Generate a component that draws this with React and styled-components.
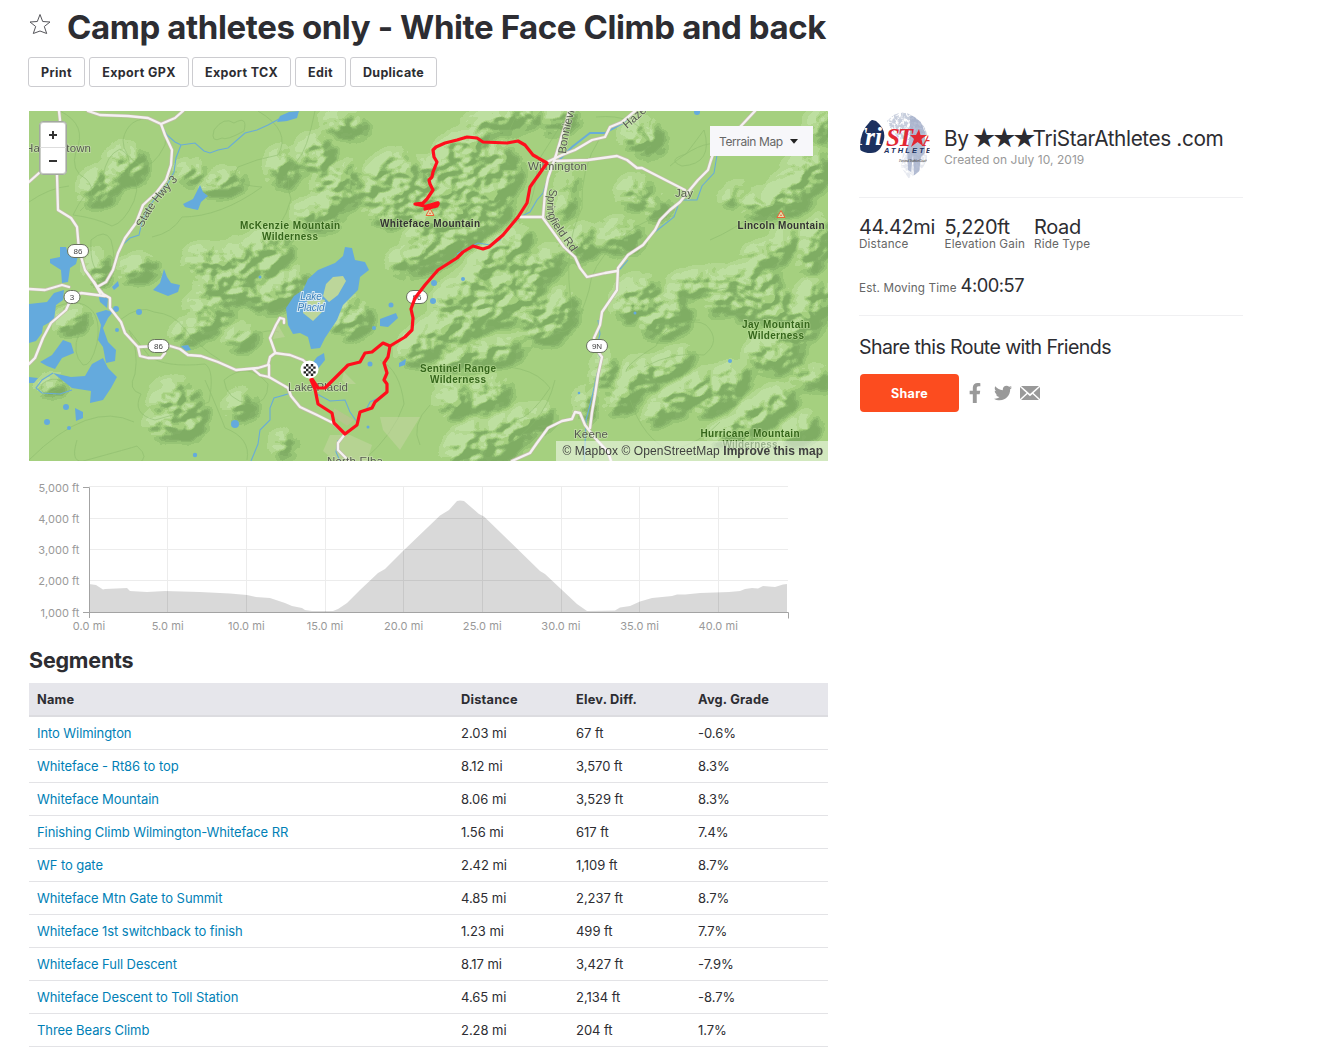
import React from "react";
import styled, { createGlobalStyle } from "styled-components";
import { FaFacebookF, FaTwitter } from "react-icons/fa";

const GlobalStyle = createGlobalStyle`
  * {
    box-sizing: border-box;
  }
  body {
    margin: 0;
    background: #fff;
    color: #2d2d32;
    font-family: Inter, "Liberation Sans", sans-serif;
  }
`;

const Page = styled.div`
  width: 1319px;
  height: 1061px;
  overflow: hidden;
  padding-left: 28px;
`;
const Header = styled.header`
  display: flex;
  height: 57px;
  padding: 13px 0 0 1px;
`;
const Title = styled.h1`
  margin: -7px 0 0 16px;
  font-size: 33px;
  line-height: 42px;
  font-weight: 700;
  letter-spacing: -0.4px;
  white-space: nowrap;
`;
const Toolbar = styled.div`
  display: flex;
  height: 54px;
`;
const Button = styled.button`
  width: ${(props) => props.$width}px;
  height: 30px;
  margin-right: ${(props) => props.$gap || 4}px;
  padding: 0;
  border: 1px solid #ccccd0;
  border-radius: 3px;
  background: #fff;
  color: #2d2d32;
  font-family: inherit;
  font-size: 12.5px;
  font-weight: 700;
  letter-spacing: 0.35px;
  white-space: nowrap;
`;
const Columns = styled.div`
  display: flex;
  padding-left: 1px;
`;
const Main = styled.main`
  width: 799px;
`;
const Sidebar = styled.aside`
  width: 384px;
  margin-left: 31px;
`;

/* map */
const MapBox = styled.div`
  position: relative;
  height: 350px;
  overflow: hidden;
  background: #a5d180;

  svg {
    display: block;
  }
`;
const ZoomControl = styled.div`
  position: absolute;
  top: 10px;
  left: 10px;
  width: 28px;
  height: 54px;
  border: 1px solid #a3a8a0;
  box-shadow: inset 0 0 0 1px #c9ccc6;
  border-radius: 4px;
  background: #fff;
`;
const ZoomButton = styled.div`
  display: flex;
  align-items: center;
  justify-content: center;
  height: 26px;
  border-bottom: ${(props) => (props.$first ? "1px solid #ddd" : "none")};
`;
const MapType = styled.div`
  position: absolute;
  top: 15px;
  right: 15px;
  display: flex;
  align-items: center;
  gap: 7px;
  width: 103px;
  height: 30px;
  padding-left: 9px;
  background: #f7f7fa;
  color: #666;
  font-size: 12px;
  letter-spacing: -0.4px;
  white-space: nowrap;
`;
const Attribution = styled.div`
  position: absolute;
  right: 0;
  bottom: 0;
  width: 272px;
  height: 20px;
  padding-right: 5px;
  background: rgba(255, 255, 255, 0.5);
  color: #404040;
  font: 12px/20px "Liberation Sans", sans-serif;
  letter-spacing: 0.1px;
  text-align: right;
  white-space: nowrap;

  b {
    letter-spacing: 0.02px;
  }
`;

/* segments */
const ChartBox = styled.div`
  height: 180px;
  padding-top: 10px;
`;
const SectionTitle = styled.h2`
  height: 42px;
  margin: 0;
  padding-top: 4px;
  font-size: 21.5px;
  line-height: 30px;
  font-weight: 700;
  letter-spacing: -0.2px;
`;
const Table = styled.table`
  width: 100%;
  border-collapse: separate;
  border-spacing: 0;
  table-layout: fixed;
  font-size: 13px;
  letter-spacing: -0.04px;
`;
const HeadCell = styled.th`
  width: ${(props) => props.$width}px;
  height: 34px;
  padding: 0 8px;
  border-bottom: 2px solid #dcdce0;
  background: #e6e6eb;
  text-align: left;
  font-size: 12.8px;
  font-weight: 700;
  letter-spacing: 0.22px;
`;
const Cell = styled.td`
  height: 33px;
  padding: 0 8px;
  border-bottom: 1px solid #e3e3e6;
`;
const SegmentLink = styled.a`
  color: #007fb6;
  letter-spacing: -0.08px;
`;

/* sidebar */
const Author = styled.section`
  display: flex;
  height: 87px;
  border-bottom: 1px solid #f0f0f2;
`;
const AuthorInfo = styled.div`
  margin-left: 14px;
  padding-top: 15px;
`;
const AuthorName = styled.div`
  font-size: 20.8px;
  line-height: 26px;
  letter-spacing: -0.4px;
  white-space: nowrap;
`;
const Stars = styled.span`
  margin-left: -2px;
  font-family: "DejaVu Sans", sans-serif;
  font-size: 27px;
  line-height: 20px;
  letter-spacing: -4px;
  vertical-align: -1px;
`;
const Created = styled.div`
  color: #999;
  font-size: 12px;
  line-height: 16px;
  letter-spacing: 0.04px;
`;
const Stats = styled.section`
  height: 118px;
  padding-top: 16px;
  border-bottom: 1px solid #f0f0f2;
`;
const StatRow = styled.div`
  display: flex;
`;
const Stat = styled.div`
  width: ${(props) => props.$width}px;
  white-space: nowrap;
`;
const StatValue = styled.div`
  font-size: 20px;
  line-height: 26px;
  letter-spacing: -0.35px;
`;
const StatLabel = styled.div`
  color: #666;
  font-size: 11.7px;
  line-height: 8px;
  letter-spacing: 0.15px;
`;
const MovingTime = styled.div`
  display: flex;
  align-items: baseline;
  gap: 4px;
  margin-top: 26px;
  color: #666;
  font-size: 11.7px;
  letter-spacing: 0.15px;

  b {
    color: #2d2d32;
    font-size: 18.3px;
    font-weight: 400;
    letter-spacing: -0.5px;
  }
`;
const ShareTitle = styled.div`
  padding-top: 18px;
  font-size: 19.6px;
  line-height: 26px;
  letter-spacing: -0.61px;
`;
const ShareRow = styled.div`
  display: flex;
  align-items: center;
  margin-top: 14px;
  padding-left: 1px;
  color: #999;
`;
const TwitterIcon = styled(FaTwitter)`
  margin: 0 8px 0 9px;
`;
const ShareButton = styled(Button)`
  height: 38px;
  border: none;
  border-radius: 4px;
  background: #fc4c1f;
  color: #fff;
`;

const segments = [
  ["Into Wilmington", "2.03 mi", "67 ft", "-0.6%"],
  ["Whiteface - Rt86 to top", "8.12 mi", "3,570 ft", "8.3%"],
  ["Whiteface Mountain", "8.06 mi", "3,529 ft", "8.3%"],
  ["Finishing Climb Wilmington-Whiteface RR", "1.56 mi", "617 ft", "7.4%"],
  ["WF to gate", "2.42 mi", "1,109 ft", "8.7%"],
  ["Whiteface Mtn Gate to Summit", "4.85 mi", "2,237 ft", "8.7%"],
  ["Whiteface 1st switchback to finish", "1.23 mi", "499 ft", "7.7%"],
  ["Whiteface Full Descent", "8.17 mi", "3,427 ft", "-7.9%"],
  ["Whiteface Descent to Toll Station", "4.65 mi", "2,134 ft", "-8.7%"],
  ["Three Bears Climb", "2.28 mi", "204 ft", "1.7%"],
];

// cx, cy, rx, ry, rotation
const hills = [
  [100, 187, 18, 14, -40], [127, 165, 16, 16, 0], [283, 168, 12, 16, 0], [222, 183, 20, 8, -10],
  [192, 173, 12, 7, 0], [235, 268, 36, 20, -25], [205, 262, 16, 12, 0], [265, 255, 24, 18, -30],
  [138, 270, 16, 9, -10], [285, 288, 24, 14, -20], [99, 268, 9, 13, 0], [240, 292, 40, 8, 0],
  [316, 155, 16, 16, 0], [340, 185, 22, 20, 20], [318, 215, 20, 12, 0], [345, 125, 20, 8, 10],
  [395, 190, 30, 34, 20], [440, 195, 34, 36, 0], [470, 160, 32, 24, 0], [492, 172, 26, 26, 0],
  [475, 205, 32, 26, 0], [450, 230, 40, 18, -10], [425, 255, 34, 12, -20], [505, 120, 38, 9, -10],
  [500, 255, 34, 14, -35], [525, 275, 42, 14, -30], [465, 290, 34, 12, -35], [350, 318, 18, 16, 0],
  [430, 340, 32, 14, -35], [465, 318, 38, 20, -35], [512, 300, 32, 18, -30], [545, 320, 22, 20, 0],
  [480, 355, 44, 10, -10], [455, 400, 14, 16, -20], [490, 395, 18, 14, -30], [470, 445, 24, 16, -40],
  [505, 435, 32, 16, -35], [535, 420, 18, 8, -20], [210, 303, 22, 7, -20], [203, 326, 30, 8, -25],
  [241, 338, 14, 8, 0], [225, 292, 20, 6, 10], [266, 302, 16, 6, 0], [175, 400, 20, 16, 0],
  [170, 425, 20, 10, 0], [190, 420, 12, 18, 30], [241, 406, 11, 11, 0], [284, 445, 8, 9, 0],
  [72, 322, 14, 8, -20], [52, 386, 11, 5, -10], [643, 138, 18, 14, 20], [636, 193, 14, 12, 0],
  [655, 207, 11, 8, 0], [620, 237, 19, 13, 0], [582, 243, 13, 14, 0], [566, 206, 5, 12, 20],
  [568, 183, 6, 5, 0], [808, 172, 20, 18, -40], [790, 195, 18, 16, -20], [764, 205, 20, 10, 0],
  [784, 243, 9, 14, 30], [764, 257, 16, 9, 0], [815, 245, 12, 26, 20], [700, 285, 30, 10, -10],
  [740, 282, 36, 12, -10], [820, 127, 10, 12, 0], [735, 195, 12, 4, -30], [638, 300, 22, 18, -40],
  [665, 318, 24, 16, -20], [760, 302, 32, 18, 0], [795, 325, 26, 16, -30], [722, 303, 16, 8, 0],
  [815, 300, 14, 16, 0], [775, 355, 26, 14, 0], [605, 373, 8, 16, 10], [645, 375, 20, 12, 0],
  [622, 397, 16, 12, -35], [672, 365, 20, 10, -30], [685, 395, 36, 12, -30], [722, 390, 30, 14, -40],
  [660, 413, 14, 5, -30], [765, 410, 32, 13, -30], [737, 430, 26, 10, -20], [812, 378, 18, 7, 10],
  [800, 430, 18, 10, -30], [586, 405, 5, 13, 0], [562, 310, 12, 16, 0], [560, 120, 16, 9, -20],
];

const contours = [
  "M123 140q5-24 30-21q16 8 12 26q-12 24-24 20q-18-8-18-25z",
  "M214 130q10-14 20-7q14-8 10 8q-18 10-22 7q-12 6-8-8z",
  "M73 215q10-22 30-38q3-22 17-28q13 6 8 24q14 6 6 28q-10 22-22 25q-16-8-39-11z",
  "M91 240q14-12 20 0q8 30-6 36q-16-4-14-36z",
  "M29 202q20-14 40-16M60 111q28 14 16 40q-6 20 10 28q14 14-6 32",
  "M258 111q34 20 20 44q-22 4-40 12q-12 18 24 20q-42 30-80 30q-10 16-30 20",
  "M315 111q-8 40-18 50q-14 20-6 38q-8 30-30 44M520 111q-14 20-12 32M570 111l-32 50q-4 50-20 60",
  "M29 331q20-30 50-28q24 6 18 40q-6 24-14 22q-12-12-4-32M42 384q10-8 20-3q4 6-8 10q-16 6-12-7z",
  "M129 330q10 20 6 44q-8 16 6 20q-10 20 14 26q26-6 54-18q6-32-4-38q-40 4-56-8z",
  "M77 440q-8 26 10 20q44-12 50-14q14 12 0 18M205 380q14 32 20 48q26 10 22 32",
  "M29 460q60-60 105-38M120 320q20-16 34-8q20 2 30 16q16 20 36 32",
  "M600 138q-20 30-18 70q-20 40-10 100M596 117q40-4 54 24M670 166q30-26 50-22",
  "M555 330q20 10 34-40q2-24 26-46q30-30 60-28M704 130q10 34-22 36q-16-6 4-12z",
  "M700 320q-34 0-44 26q-30 18-30 26M686 325q10-6 20 0q16 16-2 30q-30-4-60 12",
  "M710 240q24-10 50-30q14-10 32-4M690 300q50-26 68 4q-10 24 30 30",
  "M630 400q14 40 40 50q30-6 50-28M555 380q-12 50-60 70M430 405q-20 20-10 40",
  "M380 360q20 10 24 44q-10 30-40 56M410 360q30 12 60 8q60-8 80 20q-20 30-34 32",
  "M235 350q24-24 44-18M224 380q24-20 44 4q0 20-18 20q-24-4-26-24z",
];

const lakes = [
  "345,247 352,248 355,260 365,262 369,270 360,277 358,290 350,298 343,305 337,320 325,338 320,348 311,349 308,337 300,333 293,334 288,325 286,308 294,296 303,290 308,279 318,270 335,263 343,256",
  "200,185 203,192 208,196 201,202 198,210 193,209 185,207 183,204 193,199",
  "60,247 66,247 68,254 78,256 76,264 70,268 68,282 62,283 61,270 50,263 50,259 60,257",
  "164,269 167,277 171,283 180,285 178,292 168,296 158,292 153,290 160,283",
  "118,281 119,286 114,290 112,287",
  "29,304 47,302 54,293 64,290 63,300 56,305 54,320 43,326 42,333 36,341 29,343",
  "63,340 71,343 74,353 62,358 55,369 47,366 40,362 52,355",
  "71,377 85,376 92,364 103,358 108,368 117,377 111,388 103,400 90,403 91,391 72,388 53,373",
  "96,313 106,310 113,312 108,318 103,328 108,342 116,350 115,361 106,363 103,347 98,340 101,325",
  "98,293 108,298 107,308 100,302",
  "380,319 396,313 398,318 388,327 380,326",
  "277,122 280,116 289,112 299,111 297,118 287,121",
  "317,357 324,353 325,360 317,370 311,365",
  "181,346 188,345 191,350 186,351",
  "75,408 83,412 83,418 76,421",
  "399,363 406,359 405,365 399,367",
  "29,377 38,378 34,383 29,383",
];
const ponds = [
  [47, 422, 3], [66, 407, 3], [69, 428, 2], [235, 424, 4], [195, 455, 2.2], [139, 312, 3], [116, 309, 3],
  [370, 364, 2.5], [391, 305, 2.5], [374, 328, 2], [434, 283, 3], [433, 301, 3], [368, 427, 1.5],
  [635, 313, 1.5], [730, 361, 2], [579, 393, 1.3], [697, 112, 3], [260, 277, 1.5], [463, 279, 2], [117, 330, 2],
];

const rivers = [
  "161,124 167,135 175,142 181,145 195,143 204,151 210,153 218,150 228,148 245,133 257,130 268,125 279,119",
  "181,145 176,158 174,172 167,185 157,196 148,208 142,222 139,235 130,238 120,247",
  "547,180 543,193 537,200 530,212 520,217 507,229 500,240 490,245 478,243 466,249 457,254",
  "717,155 714,173 702,186 697,200 690,200 680,200 674,217 655,232",
  "53,373 42,380 36,388 42,393 60,394 72,390",
  "288,394 274,398 270,408 270,420 260,430 258,444 251,461",
  "598,320 600,334 596,350 602,360 597,374 592,397 586,420 585,445 584,461",
  "317,394 330,401 345,400 350,412 357,422",
  "385,395 370,402 365,412",
  "628,260 621,268 617,272",
  "338,440 336,452 340,461",
];
const roads = [
  "88,111 100,115 128,116 148,118 161,124 165,135 172,150 171,165 166,180 156,193 143,205 136,223 125,238 118,253 113,270 106,282 97,287",
  "161,124 175,118 183,111",
  "59,111 60,120 58,150 57,175 58,210 71,218 77,227 79,250 85,270 98,288 103,294 110,298 110,308 121,322 125,333 138,347 158,346 170,346 180,349 188,355 201,356 218,362 236,370 258,368 268,365 270,357 275,353 290,355 303,360 312,368",
  "29,182 39,173",
  "29,289 45,290 62,285 69,287",
  "29,364 35,358 43,338 51,323 66,310 72,297 81,293 105,296",
  "94,282 100,293",
  "138,347 140,356 148,358 161,358 165,353",
  "253,369 260,375 269,377 288,388 291,396 300,407 317,415 333,423 345,434 338,443 338,450 350,462",
  "269,365 269,377",
  "275,352 270,338 276,325 280,318 284,319 284,323",
  "512,461 530,453 537,443 548,428 562,421 572,419 575,412 580,413 585,425 595,438 608,452 611,461",
  "755,111 740,127 718,140 711,160 708,170 698,180 688,192 680,202 670,210 660,220 655,230 643,245 628,255 618,268 617,290 602,312 600,325 594,338 596,349 602,357 598,375 595,395 592,412 590,428",
  "617,271 605,273 587,277 580,268 575,257 564,247 543,218 545,193 548,178 556,155 562,135 567,120 569,111",
  "543,217 520,217",
  "547,162 562,155 575,150 592,140 605,137 610,127 622,122 635,111",
  "555,161 588,160 617,156 627,160 637,168 642,168 685,190",
];

const route = [
  "310,376 318,388 325,388 348,365 360,362 365,353 372,352 383,343 390,346 405,337 412,330 413,318 411,309 415,298 425,285 438,270 457,258 463,252 473,246 483,249 489,247 503,235 518,217 527,203 530,187 547,163 533,155 525,145 518,141 507,143 483,142 477,138 467,137 457,140 445,143 436,147 433,150 434,157 437,162 433,172 432,177 429,180 430,184 433,190 427,199 423,203 415,204 429,207 438,203 437,206 425,209",
  "390,346 388,357 384,363 387,373 384,380 387,384 387,392 375,402 372,408 360,412 357,425 345,434 334,423 332,413 318,404 315,389 311,380",
];

// x, y, text length
const townLabels = [
  ["Harrietstown", 25, 151.5, 66],
  ["Wilmington", 528, 170, 59],
  ["Jay", 675, 197, 18],
  ["Lake Placid", 288, 391, 60],
  ["Keene", 574, 438, 34],
  ["North Elba", 327, 464.5, 56],
];
const parkLabels = [
  ["McKenzie Mountain", 290, 229, 100],
  ["Wilderness", 290, 240, 56],
  ["Sentinel Range", 458, 372, 76],
  ["Wilderness", 458, 383, 56],
  ["Jay Mountain", 776, 328, 68],
  ["Wilderness", 776, 339, 56],
  ["Hurricane Mountain", 750, 437, 99],
  ["Wilderness", 750, 448, 55],
];
const shields = [
  ["86", 78, 251],
  ["3", 72, 297],
  ["86", 158.5, 346],
  ["86", 417, 297],
  ["9N", 597, 346],
];
const peaks = [
  ["Whiteface Mountain", 430, 211.5, 100],
  ["Lincoln Mountain", 781, 213.5, 87],
];

const TownText = styled.text`
  font: 11.5px "Liberation Sans", sans-serif;
  fill: #555a50;
  stroke: rgba(220, 235, 200, 0.55);
  stroke-width: 1.5px;
  paint-order: stroke;
`;
const ParkText = styled.text`
  font: bold 10px "Liberation Sans", sans-serif;
  fill: #35661b;
  text-anchor: middle;
  stroke: rgba(190, 222, 155, 0.7);
  stroke-width: 1.5px;
  paint-order: stroke;
`;
const PeakText = styled(ParkText)`
  fill: #333;
`;
const WaterText = styled.text`
  font: italic 10px "Liberation Sans", sans-serif;
  fill: #3f83bd;
  text-anchor: middle;
  stroke: #d8e9f3;
  stroke-width: 2px;
  paint-order: stroke;
`;
const ShieldText = styled.text`
  font: 8px "Liberation Sans", sans-serif;
  fill: #444;
  text-anchor: middle;
`;

const TerrainMap = () => {
  const red = "0.5 0.5 0.5 0.5 0.51 0.545 0.595 0.648 0.7 0.745";
  const green = "0.68 0.68 0.68 0.68 0.69 0.725 0.775 0.818 0.85 0.875";
  const blue = "0.39 0.39 0.39 0.39 0.4 0.425 0.46 0.5 0.565 0.63";
  return (
    <svg width="799" height="350" viewBox="29 111 799 350">
      <defs>
        <filter
          id="relief"
          filterUnits="userSpaceOnUse"
          x="-20"
          y="60"
          width="900"
          height="450"
          colorInterpolationFilters="sRGB"
        >
          <feGaussianBlur in="SourceAlpha" stdDeviation="5.5" result="mass" />
          <feTurbulence type="fractalNoise" baseFrequency="0.06 0.075" numOctaves="2" seed="8" result="noise" />
          <feComposite in="mass" in2="noise" operator="arithmetic" k1="1.5" result="height" />
          <feDiffuseLighting in="height" surfaceScale="5.5" diffuseConstant="1" lightingColor="#fff">
            <feDistantLight azimuth="225" elevation="49" />
          </feDiffuseLighting>
          <feComponentTransfer>
            <feFuncR type="discrete" tableValues={red} />
            <feFuncG type="discrete" tableValues={green} />
            <feFuncB type="discrete" tableValues={blue} />
          </feComponentTransfer>
        </filter>
        <path id="hwy3" d="M143 228Q152 206 179 179" />
        <path id="bonnie" d="M566 154Q568 130 577 104" />
        <path id="haze" d="M627 129L652 107" />
        <path id="springfield" d="M550 188Q543 212 553 226T574 256" />
      </defs>
      <g filter="url(#relief)">
        {hills.map(([cx, cy, rx, ry, turn], i) => (
          <ellipse key={i} cx={cx} cy={cy} rx={rx} ry={ry} transform={`rotate(${turn} ${cx} ${cy})`} />
        ))}
      </g>
      <g fill="none" stroke="#8ab96c" strokeWidth="0.8" opacity="0.65">
        {contours.map((d) => (
          <path key={d} d={d} />
        ))}
      </g>
      <g fill="#c7d6a5" opacity="0.5">
        <path d="M380 417h40l-20 33l-17-20z" />
        <path d="M330 435h20l22 10l-5 16h-32l-12-10z" />
        <path d="M334 408l20 12l-7 6l-14-10z" fill="#c5bd9c" />
        <path d="M277 323l8 14l-12 2z" />
        <path d="M344 372l12 12h-10l-4-4z" />
      </g>
      <g fill="#64aadd">
        {lakes.map((points) => (
          <polygon key={points} points={points} />
        ))}
        {ponds.map(([x, y, r]) => (
          <circle key={`${x}-${y}`} cx={x} cy={y} r={r} />
        ))}
      </g>
      <path d="M333 277l10-1l3 5l-8 14l-9 7l-6-6l3-12zM305 303l8-6l12 3l-3 12l-9 9l-10-8z" fill="#bcd69a" />
      <g fill="none" stroke="#69acd8" strokeWidth="1.1">
        {rivers.map((points) => (
          <polyline key={points} points={points} />
        ))}
        <polyline points="635,111 623,123 605,133 590,133 572,147 557,162" strokeWidth="2" />
      </g>
      <g fill="none" strokeLinejoin="round" strokeLinecap="round">
        {roads.map((points) => (
          <polyline key={points} points={points} stroke="#c1bda9" strokeWidth="3.6" />
        ))}
        {roads.map((points) => (
          <polyline key={points} points={points} stroke="#f5f1f2" strokeWidth="2.3" />
        ))}
      </g>
      {townLabels.map(([text, x, y, length]) => (
        <TownText key={text} x={x} y={y} textLength={length}>
          {text}
        </TownText>
      ))}
      <TownText>
        <textPath href="#hwy3" textLength="60">State Hwy 3</textPath>
      </TownText>
      <TownText>
        <textPath href="#bonnie">Bonnievi</textPath>
      </TownText>
      <TownText>
        <textPath href="#haze">Haze</textPath>
      </TownText>
      <TownText>
        <textPath href="#springfield" textLength="72">Springfield Rd</textPath>
      </TownText>
      {parkLabels.map(([text, x, y, length]) => (
        <ParkText key={`${text}${x}`} x={x} y={y} textLength={length}>
          {text}
        </ParkText>
      ))}
      <WaterText x="311" y="300">Lake</WaterText>
      <WaterText x="311" y="310.5">Placid</WaterText>
      {shields.map(([text, x, y]) => (
        <g key={`${x}`}>
          <rect
            x={x - (text.length > 1 ? 10.5 : 8)}
            y={y - 6.5}
            width={text.length > 1 ? 21 : 16}
            height="13"
            rx="6.5"
            fill="#fff"
            stroke="#68715e"
          />
          <ShieldText x={x} y={y + 3}>{text}</ShieldText>
        </g>
      ))}
      {peaks.map(([text, x, y, length]) => (
        <g key={text}>
          <path d={`M${x} ${y - 3}l4 7h-8z`} fill="#dfe0ae" stroke="#ee6237" />
          <path d={`M${x} ${y + 0.5}l1 2h-2z`} fill="#ee6237" />
          <PeakText x={x} y={y + 15} textLength={length}>
            {text}
          </PeakText>
        </g>
      ))}
      <g fill="none" stroke="#ff0f1c" strokeWidth="3.2" strokeLinejoin="round" strokeLinecap="round">
        {route.map((points) => (
          <polyline key={points} points={points} />
        ))}
        <path d="M427 207l10-3" strokeWidth="5" />
      </g>
      <circle cx="309.5" cy="369.5" r="9" fill="#fff" />
      <g fill="#222">
        <path d="M306 364h2.4v2.4H306zM310.8 364h2.4v2.4h-2.4zM303.6 366.4h2.4v2.4h-2.4zM308.4 366.4h2.4v2.4h-2.4zM313.2 366.4h2.4v2.4h-2.4zM306 368.8h2.4v2.4H306zM310.8 368.8h2.4v2.4h-2.4zM303.6 371.2h2.4v2.4h-2.4zM308.4 371.2h2.4v2.4h-2.4zM313.2 371.2h2.4v2.4h-2.4zM306 373.6h2.4v2.4H306zM310.8 373.6h2.4v2.4h-2.4z" />
      </g>
    </svg>
  );
};

const AxisText = styled.text`
  font: 11px Inter, sans-serif;
  fill: #999;
  letter-spacing: 0.06px;
  text-anchor: ${(props) => props.$anchor};
`;

// plot area runs from x 60 to 759 and from y 16 to 141
const profile =
  "60,113 67,114 74,118.5 76,118 98,117 101,120 118,121 136,120 171,121 201,122.5 218,124 227,126 241,127 256,132 263,135 273,137 276,139 283,140 304,140 309,138 318,132 331,119 349,102 356,98 374,80 411,44.5 420,39 428,30 431,29.5 435,30 450,43 455,45.5 511,100 516,103 532,118 548,133 558,140 586,139.5 591,136.5 601,135 611,130.5 623,127 643,125 648,123.5 656,123.5 671,122 700,121 711,120 716,118 723,117 729,117.5 734,115 746,116 754,113.5 758,113";

const ElevationChart = () => (
  <svg width="799" height="165" viewBox="0 0 799 165" display="block">
    <g stroke="#ececec" shapeRendering="crispEdges">
      {[15.5, 47.5, 78.5, 109.5].map((y) => (
        <line key={y} x1="60" x2="759" y1={y} y2={y} />
      ))}
      {[138.5, 217.5, 296.5, 374.5, 453.5, 532.5, 610.5, 689.5].map((x) => (
        <line key={x} x1={x} x2={x} y1="16" y2="141" />
      ))}
    </g>
    <polygon points={`60,141 ${profile} 758,141`} fill="#000" fillOpacity="0.15" />
    <path d="M54 16.5h6.5V147M54 141.5h705.5V147.5" fill="none" stroke="#a3a3a3" />
    {["5,000", "4,000", "3,000", "2,000", "1,000"].map((ft, i) => (
      <AxisText key={ft} x="50.5" y={20.6 + i * 31.25} $anchor="end">
        {ft} ft
      </AxisText>
    ))}
    {[0, 5, 10, 15, 20, 25, 30, 35, 40].map((mi) => (
      <AxisText key={mi} x={60 + mi * 15.73} y="159" $anchor="middle">
        {mi}.0 mi
      </AxisText>
    ))}
  </svg>
);

const LogoText = styled.text`
  font: italic bold ${(props) => props.$size}px "Liberation Serif", serif;
  fill: ${(props) => props.$color};
`;

const Avatar = () => (
  <svg width="71" height="70" viewBox="0 0 71 70">
    <defs>
      <clipPath id="round">
        <circle cx="36" cy="35" r="35" />
      </clipPath>
      <filter id="speckle" x="0" y="0" width="1" height="1">
        <feTurbulence type="fractalNoise" baseFrequency="0.35" numOctaves="2" seed="3" />
        <feColorMatrix values="0 0 0 0 1  0 0 0 0 1  0 0 0 0 1  0 0 0 5 -2.2" result="dots" />
        <feComposite in="SourceGraphic" in2="dots" operator="out" />
        <feGaussianBlur stdDeviation="0.4" />
      </filter>
    </defs>
    <g clipPath="url(#round)">
      <path d="M28 10Q40-3 54 4Q66 10 68 24L58 30L40 28L32 18z" fill="#b5bed2" filter="url(#speckle)" opacity="0.75" />
      <path d="M44 42h24v18l-18 8l-8-12z" fill="#d5dae6" filter="url(#speckle)" opacity="0.6" />
      <path d="M51 6q7-4 10 3l5 13v20l-4 4-2 16-5 3-1-22-2 18-3-2-1-22 3-12z" fill="#a2aec9" opacity="0.8" />
      <path d="M0 12Q8 6 17 10Q27 18 25 28Q22 42 12 42Q4 42 0 38z" fill="#1c315f" />
      <LogoText x="-8" y="34" textLength="31" $size={25} $color="#fff">Tri</LogoText>
      <LogoText x="27" y="35" textLength="27" $size={25} $color="#e22834">ST</LogoText>
      <path d="M60 18l1.5 6h6.500l-5.500 4 1.500 7-5.500-4-6.500 5 3-8-4-4h6z" fill="#e22834" />
      <LogoText x="64" y="35" $size={20} $color="#e22834">A</LogoText>
      <text x="25" y="42" textLength="47" fill="#1c315f" fontFamily="Liberation Sans" fontStyle="italic" fontWeight="700" fontSize="7.5">ATHLETE</text>
      <text x="40" y="50.5" textLength="28" fill="#444" fontFamily="Liberation Serif" fontStyle="italic" fontSize="3.6">Personal Triathlon Coach</text>
    </g>
  </svg>
);

const App = () => {
  return (
    <Page>
      <GlobalStyle />
      <Header>
        <svg width="22" height="22" viewBox="0 0 22 22" fill="none" stroke="#55555a">
          <path d="M11 1.5L13.7 8.5L21 9L15.3 13.5L17.7 20.5L11 18L4.3 20.5L6.7 13.5L1 9L8.3 8.5Z" strokeLinejoin="round" />
        </svg>
        <Title>Camp athletes only - White Face Climb and back</Title>
      </Header>
      <Toolbar>
        <Button $width={57}>Print</Button>
        <Button $width={100} $gap={3}>Export GPX</Button>
        <Button $width={99}>Export TCX</Button>
        <Button $width={51}>Edit</Button>
        <Button $width={87}>Duplicate</Button>
      </Toolbar>
      <Columns>
        <Main>
          <MapBox>
            <TerrainMap />
            <ZoomControl>
              <ZoomButton $first>
                <svg width="8" height="8" stroke="#333" strokeWidth="2">
                  <path d="M0 4h8M4 0v8" />
                </svg>
              </ZoomButton>
              <ZoomButton>
                <svg width="8" height="8" stroke="#333" strokeWidth="2">
                  <path d="M0 4h8" />
                </svg>
              </ZoomButton>
            </ZoomControl>
            <MapType>
              Terrain Map
              <svg width="8" height="5" fill="#222">
                <path d="M0 0h8L4 4.8z" />
              </svg>
            </MapType>
            <Attribution>
              © Mapbox © OpenStreetMap <b>Improve this map</b>
            </Attribution>
          </MapBox>
          <ChartBox>
            <ElevationChart />
          </ChartBox>
          <SectionTitle>Segments</SectionTitle>
          <Table>
            <thead>
              <tr>
                <HeadCell $width={424}>Name</HeadCell>
                <HeadCell $width={115}>Distance</HeadCell>
                <HeadCell $width={122}>Elev. Diff.</HeadCell>
                <HeadCell $width={138}>Avg. Grade</HeadCell>
              </tr>
            </thead>
            <tbody>
              {segments.map(([name, distance, diff, grade]) => (
                <tr key={name}>
                  <Cell>
                    <SegmentLink>{name}</SegmentLink>
                  </Cell>
                  <Cell>{distance}</Cell>
                  <Cell>{diff}</Cell>
                  <Cell>{grade}</Cell>
                </tr>
              ))}
            </tbody>
          </Table>
        </Main>
        <Sidebar>
          <Author>
            <Avatar />
            <AuthorInfo>
              <AuthorName>
                By <Stars>★★★</Stars>TriStarAthletes .com
              </AuthorName>
              <Created>Created on July 10, 2019</Created>
            </AuthorInfo>
          </Author>
          <Stats>
            <StatRow>
              <Stat $width={85.5}>
                <StatValue>44.42mi</StatValue>
                <StatLabel>Distance</StatLabel>
              </Stat>
              <Stat $width={89.5}>
                <StatValue>5,220ft</StatValue>
                <StatLabel>Elevation Gain</StatLabel>
              </Stat>
              <Stat $width={100}>
                <StatValue>Road</StatValue>
                <StatLabel>Ride Type</StatLabel>
              </Stat>
            </StatRow>
            <MovingTime>
              Est. Moving Time <b>4:00:57</b>
            </MovingTime>
          </Stats>
          <ShareTitle>Share this Route with Friends</ShareTitle>
          <ShareRow>
            <ShareButton $width={99} $gap={6}>Share</ShareButton>
            <FaFacebookF size={20} />
            <TwitterIcon size={18} />
            <svg width="20" height="14" viewBox="0 0 20 14" fill="#999">
              <path d="M1 0h18l-9 8zM0 1l6.5 6L0 13zM20 1l-6.5 6L20 13zM1 14l6.5-6L10 10.2L12.5 8L19 14z" />
            </svg>
          </ShareRow>
        </Sidebar>
      </Columns>
    </Page>
  );
};

export default App;
